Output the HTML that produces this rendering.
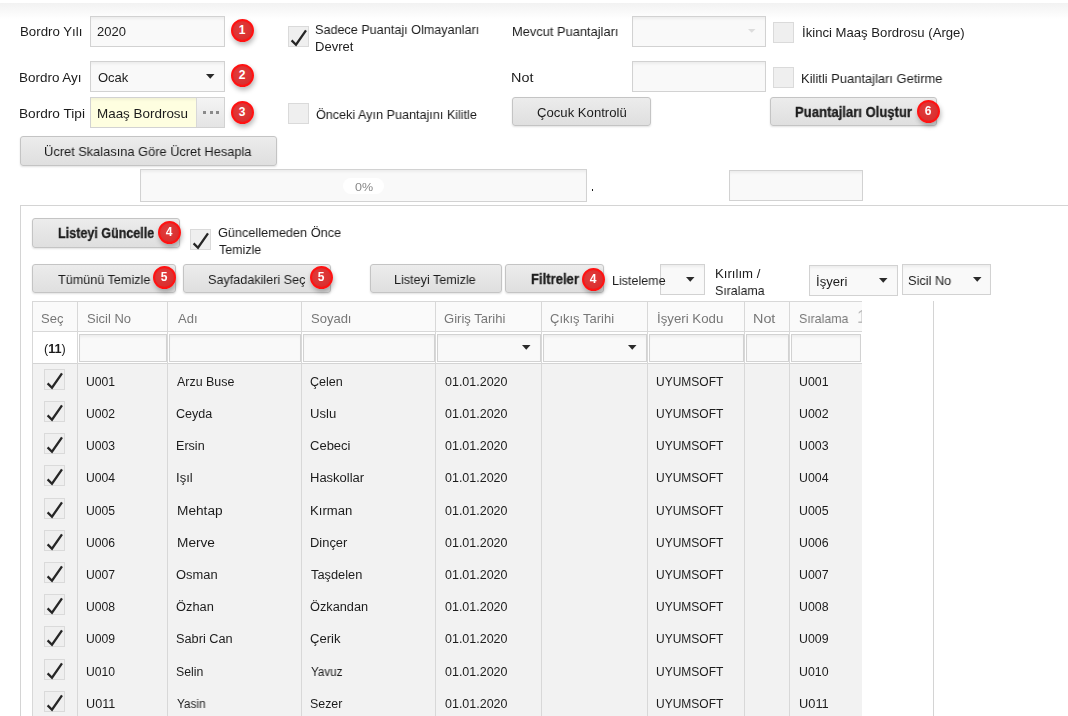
<!DOCTYPE html><html><head><meta charset="utf-8"><style>
*{margin:0;padding:0;box-sizing:border-box}
html,body{width:1068px;height:716px;overflow:hidden;background:#fff;font-family:"Liberation Sans",sans-serif;color:#1c1c1c}
.t{position:absolute;white-space:nowrap;line-height:17px;transform-origin:0 0;will-change:transform}
.inp{position:absolute;border:1px solid #d2d2d2;background:#f9f9f9;box-shadow:inset 0 3px 3px -1px rgba(0,0,0,.05)}
.btn{position:absolute;border:1px solid #c4c4c4;border-radius:3px;background:linear-gradient(#ececec,#dfdfdf);box-shadow:0 1px 2px rgba(0,0,0,.12)}
.chk{position:absolute;border:1px solid #dadada;background:#efefef}
.chk svg{position:absolute;left:-1px;top:-1px}
.badge{position:absolute;width:23px;height:23px;border-radius:50%;background:radial-gradient(circle at 40% 40%,#e33c3c,#d42a2a);border:2px solid #ff1212;color:#fff;font-weight:bold;font-size:12px;line-height:19px;text-align:center;box-shadow:1px 3px 5px rgba(0,0,0,.28)}
.arr{position:absolute;width:0;height:0}
.topbar{position:absolute;left:0;top:3px;width:1068px;height:16px;background:linear-gradient(#f2f2f2,rgba(255,255,255,0))}
</style></head><body>
<div class="topbar"></div>
<div class="t" id="t0" style="left:19.59px;top:23.20px;font-size:13px;transform:scaleX(1.0205);">Bordro Yılı</div>
<div class="inp" style="left:90px;top:16px;width:135px;height:31px;"></div>
<div class="t" id="t1" style="left:97.29px;top:23.20px;font-size:13px;transform:scaleX(0.9940);">2020</div>
<div class="badge" style="left:230.5px;top:18.5px;">1</div>
<div class="chk" style="left:288px;top:26px;width:21px;height:21px;"><svg width="21" height="21" viewBox="0 0 21 21"><path d="M3.6 14.4 L8 18.7 L18 4.4" fill="none" stroke="#262626" stroke-width="2.3"/></svg></div>
<div class="t" id="t2" style="left:315.34px;top:21.20px;font-size:13px;transform:scaleX(0.9713);">Sadece Puantajı Olmayanları</div>
<div class="t" id="t3" style="left:315.30px;top:38.20px;font-size:13px;transform:scaleX(1.0007);">Devret</div>
<div class="t" id="t4" style="left:512.11px;top:23.20px;font-size:13px;transform:scaleX(0.9886);">Mevcut Puantajları</div>
<div class="inp" style="left:632px;top:16px;width:134px;height:31px;"></div>
<svg style="position:absolute;left:746.50px;top:28.00px" width="9.50" height="5.70"><polygon points="1,1 8.50,1 4.75,4.70" fill="#dcdcdc"/></svg>
<div class="chk" style="left:773px;top:22px;width:21px;height:21px;"></div>
<div class="t" id="t5" style="left:802.19px;top:24.20px;font-size:13px;transform:scaleX(1.0101);">İkinci Maaş Bordrosu (Arge)</div>
<div class="t" id="t6" style="left:19.46px;top:69.20px;font-size:13px;transform:scaleX(1.0348);">Bordro Ayı</div>
<div class="inp" style="left:90px;top:61px;width:135px;height:31px;"></div>
<div class="t" id="t7" style="left:97.52px;top:69.20px;font-size:13px;transform:scaleX(0.9942);">Ocak</div>
<svg style="position:absolute;left:204.50px;top:73.40px" width="10.50" height="6.70"><polygon points="1,1 9.50,1 5.25,5.70" fill="#2b2b2b"/></svg>
<div class="badge" style="left:230.5px;top:63.5px;">2</div>
<div class="t" id="t8" style="left:511.36px;top:69.20px;font-size:13px;transform:scaleX(1.1077);">Not</div>
<div class="inp" style="left:632px;top:61px;width:134px;height:31px;"></div>
<div class="chk" style="left:773px;top:67px;width:21px;height:21px;"></div>
<div class="t" id="t9" style="left:801.41px;top:70.20px;font-size:13px;transform:scaleX(0.9944);">Kilitli Puantajları Getirme</div>
<div class="t" id="t10" style="left:19.43px;top:105.20px;font-size:13px;transform:scaleX(1.0494);">Bordro Tipi</div>
<div class="inp" style="left:90px;top:97px;width:135px;height:31px;background:#fefee0;"></div>
<div style="position:absolute;left:196px;top:98px;width:28px;height:29px;border-left:1px solid #d8d8d8;background:linear-gradient(#f4f4f4,#e4e4e4)"></div>
<div style="position:absolute;left:202.5px;top:110.5px;width:3px;height:3px;background:#8a8a8a"></div>
<div style="position:absolute;left:209.5px;top:110.5px;width:3px;height:3px;background:#8a8a8a"></div>
<div style="position:absolute;left:216px;top:110.5px;width:3px;height:3px;background:#8a8a8a"></div>
<div class="t" id="t11" style="left:97.45px;top:105.20px;font-size:13px;transform:scaleX(1.0326);">Maaş Bordrosu</div>
<div class="badge" style="left:230.5px;top:100.5px;">3</div>
<div class="chk" style="left:288px;top:103px;width:21px;height:21px;"></div>
<div class="t" id="t12" style="left:315.54px;top:106.20px;font-size:13px;transform:scaleX(0.9696);">Önceki Ayın Puantajını Kilitle</div>
<div class="btn" style="left:512px;top:97px;width:139px;height:29px;"></div>
<div class="t" id="t13" style="left:537.10px;top:104.20px;font-size:13px;transform:scaleX(1.0093);">Çocuk Kontrolü</div>
<div class="btn" style="left:770px;top:97px;width:167px;height:29px;"></div>
<div class="t" id="t14" style="left:795.20px;top:103.87px;font-size:14px;transform:scaleX(0.9345);font-weight:bold;-webkit-text-stroke:0.3px #222;">Puantajları Oluştur</div>
<div class="badge" style="left:916.5px;top:99.5px;">6</div>
<div class="btn" style="left:20px;top:136px;width:257px;height:30px;"></div>
<div class="t" id="t15" style="left:44.42px;top:143.20px;font-size:13px;transform:scaleX(0.9866);">Ücret Skalasına Göre Ücret Hesapla</div>
<div class="inp" style="left:140px;top:169px;width:447px;height:33px;"></div>
<div style="position:absolute;left:343px;top:178px;width:41px;height:16px;border-radius:8px;background:#fff"></div>
<div class="t" id="t16" style="left:355.38px;top:178.86px;font-size:11px;transform:scaleX(1.1370);color:#888;">0%</div>
<div style="position:absolute;left:592px;top:189px;width:1px;height:2px;background:#1a1a1a"></div>
<div class="inp" style="left:729px;top:170px;width:134px;height:31px;"></div>
<div style="position:absolute;left:20px;top:205px;width:1100px;height:600px;border:1px solid #d4d4d4;background:#fff"></div>
<div class="btn" style="left:32px;top:218px;width:148px;height:30px;"></div>
<div class="t" id="t17" style="left:58.25px;top:224.87px;font-size:14px;transform:scaleX(0.8961);font-weight:bold;-webkit-text-stroke:0.3px #222;">Listeyi Güncelle</div>
<div class="badge" style="left:157.5px;top:220.5px;font-family:"Liberation Serif",serif;font-size:13px;">4</div>
<div class="chk" style="left:190px;top:229px;width:21px;height:21px;"><svg width="21" height="21" viewBox="0 0 21 21"><path d="M3.6 14.4 L8 18.7 L18 4.4" fill="none" stroke="#262626" stroke-width="2.3"/></svg></div>
<div class="t" id="t18" style="left:218.43px;top:224.20px;font-size:13px;transform:scaleX(0.9791);">Güncellemeden Önce</div>
<div class="t" id="t19" style="left:219.40px;top:241.20px;font-size:13px;transform:scaleX(0.9586);">Temizle</div>
<div class="btn" style="left:32px;top:264px;width:144px;height:29px;"></div>
<div class="t" id="t20" style="left:57.89px;top:271.20px;font-size:13px;transform:scaleX(0.9706);">Tümünü Temizle</div>
<div class="badge" style="left:152.5px;top:265.5px;font-family:"Liberation Serif",serif;font-size:13px;">5</div>
<div class="btn" style="left:183px;top:264px;width:148px;height:29px;"></div>
<div class="t" id="t21" style="left:207.54px;top:271.20px;font-size:13px;transform:scaleX(0.9698);">Sayfadakileri Seç</div>
<div class="badge" style="left:309.5px;top:265.5px;font-family:"Liberation Serif",serif;font-size:13px;">5</div>
<div class="btn" style="left:370px;top:264px;width:132px;height:29px;"></div>
<div class="t" id="t22" style="left:394.34px;top:271.20px;font-size:13px;transform:scaleX(0.9688);">Listeyi Temizle</div>
<div class="btn" style="left:505px;top:264px;width:99px;height:29px;"></div>
<div class="t" id="t23" style="left:531.27px;top:270.87px;font-size:14px;transform:scaleX(0.9323);font-weight:bold;-webkit-text-stroke:0.3px #222;">Filtreler</div>
<div class="badge" style="left:581.5px;top:267.5px;font-family:"Liberation Serif",serif;font-size:13px;">4</div>
<div class="inp" style="left:660px;top:264px;width:45px;height:31px;"></div>
<svg style="position:absolute;left:684.50px;top:276.00px" width="10.50" height="6.70"><polygon points="1,1 9.50,1 5.25,5.70" fill="#2b2b2b"/></svg>
<div class="t" id="t24" style="left:611.54px;top:272.20px;font-size:13px;transform:scaleX(0.9633);">Listeleme</div>
<div class="t" id="t25" style="left:715.28px;top:265.20px;font-size:13px;transform:scaleX(1.0139);">Kırılım /</div>
<div class="t" id="t26" style="left:715.37px;top:282.20px;font-size:13px;transform:scaleX(0.9532);">Sıralama</div>
<div class="inp" style="left:809px;top:265px;width:89px;height:31px;"></div>
<div class="t" id="t27" style="left:815.70px;top:273.20px;font-size:13px;transform:scaleX(1.0079);">İşyeri</div>
<svg style="position:absolute;left:877.50px;top:277.00px" width="10.50" height="6.70"><polygon points="1,1 9.50,1 5.25,5.70" fill="#2b2b2b"/></svg>
<div class="inp" style="left:902px;top:264px;width:89px;height:31px;"></div>
<div class="t" id="t28" style="left:908.43px;top:272.20px;font-size:13px;transform:scaleX(0.9819);">Sicil No</div>
<svg style="position:absolute;left:971.50px;top:276.20px" width="10.50" height="6.70"><polygon points="1,1 9.50,1 5.25,5.70" fill="#2b2b2b"/></svg>
<div style="position:absolute;left:933px;top:301px;width:1px;height:420px;background:#d4d4d4"></div>
<div style="position:absolute;left:32px;top:301px;width:830px;height:31px;background:#fafafa;border-top:1px solid #d8d8d8;border-bottom:1px solid #d8d8d8"></div>
<div style="position:absolute;left:32px;top:332px;width:830px;height:32px;background:#fff;border-bottom:1px solid #d4d4d4"></div>
<div style="position:absolute;left:32px;top:364px;width:830px;height:360px;background:#f2f2f2"></div>
<div style="position:absolute;left:32px;top:301px;width:1px;height:420px;background:#d8d8d8"></div>
<div style="position:absolute;left:77px;top:301px;width:1px;height:420px;background:#d8d8d8"></div>
<div style="position:absolute;left:167px;top:301px;width:1px;height:420px;background:#d8d8d8"></div>
<div style="position:absolute;left:301px;top:301px;width:1px;height:420px;background:#d8d8d8"></div>
<div style="position:absolute;left:435px;top:301px;width:1px;height:420px;background:#d8d8d8"></div>
<div style="position:absolute;left:541px;top:301px;width:1px;height:420px;background:#d8d8d8"></div>
<div style="position:absolute;left:647px;top:301px;width:1px;height:420px;background:#d8d8d8"></div>
<div style="position:absolute;left:744px;top:301px;width:1px;height:420px;background:#d8d8d8"></div>
<div style="position:absolute;left:789px;top:301px;width:1px;height:420px;background:#d8d8d8"></div>
<div class="t" id="t29" style="left:41.30px;top:310.20px;font-size:13px;color:#777;">Seç</div>
<div class="t" id="t30" style="left:86.50px;top:310.20px;font-size:13px;transform:scaleX(0.9911);color:#777;">Sicil No</div>
<div class="t" id="t31" style="left:177.60px;top:310.20px;font-size:13px;transform:scaleX(1.0000);color:#777;">Adı</div>
<div class="t" id="t32" style="left:310.50px;top:310.20px;font-size:13px;color:#777;">Soyadı</div>
<div class="t" id="t33" style="left:444.29px;top:310.20px;font-size:13px;transform:scaleX(1.0035);color:#777;">Giriş Tarihi</div>
<div class="t" id="t34" style="left:550.40px;top:310.20px;font-size:13px;color:#777;">Çıkış Tarihi</div>
<div class="t" id="t35" style="left:657.18px;top:310.20px;font-size:13px;transform:scaleX(1.0192);color:#777;">İşyeri Kodu</div>
<div class="t" id="t36" style="left:753.25px;top:310.20px;font-size:13px;transform:scaleX(1.1053);color:#777;">Not</div>
<div class="t" id="t37" style="left:798.74px;top:310.20px;font-size:13px;transform:scaleX(0.9492);color:#777;">Sıralama</div>
<div style="position:absolute;left:855px;top:302px;width:7px;height:28px;overflow:hidden"><div style="position:absolute;left:2px;top:3px;font-size:18px;line-height:24px;color:#bbb;white-space:nowrap;will-change:transform">1</div></div>
<div class="inp" style="left:79px;top:334px;width:88px;height:28px;"></div>
<div class="inp" style="left:169px;top:334px;width:132px;height:28px;"></div>
<div class="inp" style="left:303px;top:334px;width:132px;height:28px;"></div>
<div class="inp" style="left:437px;top:334px;width:104px;height:28px;"></div>
<div class="inp" style="left:543px;top:334px;width:104px;height:28px;"></div>
<div class="inp" style="left:649px;top:334px;width:95px;height:28px;"></div>
<div class="inp" style="left:746px;top:334px;width:43px;height:28px;"></div>
<div class="inp" style="left:791px;top:334px;width:70px;height:28px;"></div>
<svg style="position:absolute;left:521.20px;top:344.00px" width="10.50" height="6.70"><polygon points="1,1 9.50,1 5.25,5.70" fill="#2b2b2b"/></svg>
<svg style="position:absolute;left:626.50px;top:344.00px" width="10.50" height="6.70"><polygon points="1,1 9.50,1 5.25,5.70" fill="#2b2b2b"/></svg>
<div class="t" id="t38" style="left:44.23px;top:340.53px;font-size:12px;transform:scaleX(1.0551);">(<b>11</b>)</div>
<div class="chk" style="left:44px;top:369px;width:21px;height:21px;"><svg width="21" height="21" viewBox="0 0 21 21"><path d="M3.6 14.4 L8 18.7 L18 4.4" fill="none" stroke="#262626" stroke-width="2.3"/></svg></div>
<div class="t" id="t39" style="left:86.39px;top:373.53px;font-size:12px;transform:scaleX(1.0149);">U001</div>
<div class="t" id="t40" style="left:176.78px;top:373.53px;font-size:12px;transform:scaleX(1.0366);">Arzu Buse</div>
<div class="t" id="t41" style="left:310.08px;top:373.53px;font-size:12px;transform:scaleX(1.0473);">Çelen</div>
<div class="t" id="t42" style="left:445.40px;top:373.53px;font-size:12px;transform:scaleX(1.0401);">01.01.2020</div>
<div class="t" id="t43" style="left:655.90px;top:373.53px;font-size:12px;transform:scaleX(1.0001);">UYUMSOFT</div>
<div class="t" id="t44" style="left:798.56px;top:373.53px;font-size:12px;transform:scaleX(1.0296);">U001</div>
<div class="chk" style="left:44px;top:401px;width:21px;height:21px;"><svg width="21" height="21" viewBox="0 0 21 21"><path d="M3.6 14.4 L8 18.7 L18 4.4" fill="none" stroke="#262626" stroke-width="2.3"/></svg></div>
<div class="t" id="t45" style="left:86.39px;top:405.53px;font-size:12px;transform:scaleX(1.0149);">U002</div>
<div class="t" id="t46" style="left:175.73px;top:405.53px;font-size:12px;transform:scaleX(1.0476);">Ceyda</div>
<div class="t" id="t47" style="left:310.04px;top:405.53px;font-size:12px;transform:scaleX(1.0923);">Uslu</div>
<div class="t" id="t48" style="left:445.40px;top:405.53px;font-size:12px;transform:scaleX(1.0401);">01.01.2020</div>
<div class="t" id="t49" style="left:655.90px;top:405.53px;font-size:12px;transform:scaleX(1.0001);">UYUMSOFT</div>
<div class="t" id="t50" style="left:798.56px;top:405.53px;font-size:12px;transform:scaleX(1.0296);">U002</div>
<div class="chk" style="left:44px;top:433px;width:21px;height:21px;"><svg width="21" height="21" viewBox="0 0 21 21"><path d="M3.6 14.4 L8 18.7 L18 4.4" fill="none" stroke="#262626" stroke-width="2.3"/></svg></div>
<div class="t" id="t51" style="left:86.39px;top:437.53px;font-size:12px;transform:scaleX(1.0149);">U003</div>
<div class="t" id="t52" style="left:175.75px;top:437.53px;font-size:12px;transform:scaleX(1.0467);">Ersin</div>
<div class="t" id="t53" style="left:310.03px;top:437.53px;font-size:12px;transform:scaleX(1.0839);">Cebeci</div>
<div class="t" id="t54" style="left:445.40px;top:437.53px;font-size:12px;transform:scaleX(1.0401);">01.01.2020</div>
<div class="t" id="t55" style="left:655.90px;top:437.53px;font-size:12px;transform:scaleX(1.0001);">UYUMSOFT</div>
<div class="t" id="t56" style="left:798.56px;top:437.53px;font-size:12px;transform:scaleX(1.0296);">U003</div>
<div class="chk" style="left:44px;top:465px;width:21px;height:21px;"><svg width="21" height="21" viewBox="0 0 21 21"><path d="M3.6 14.4 L8 18.7 L18 4.4" fill="none" stroke="#262626" stroke-width="2.3"/></svg></div>
<div class="t" id="t57" style="left:86.39px;top:469.53px;font-size:12px;transform:scaleX(1.0149);">U004</div>
<div class="t" id="t58" style="left:175.65px;top:469.53px;font-size:12px;transform:scaleX(1.0895);">Işıl</div>
<div class="t" id="t59" style="left:310.05px;top:469.53px;font-size:12px;transform:scaleX(1.0819);">Haskollar</div>
<div class="t" id="t60" style="left:445.40px;top:469.53px;font-size:12px;transform:scaleX(1.0401);">01.01.2020</div>
<div class="t" id="t61" style="left:655.90px;top:469.53px;font-size:12px;transform:scaleX(1.0001);">UYUMSOFT</div>
<div class="t" id="t62" style="left:798.56px;top:469.53px;font-size:12px;transform:scaleX(1.0296);">U004</div>
<div class="chk" style="left:44px;top:498px;width:21px;height:21px;"><svg width="21" height="21" viewBox="0 0 21 21"><path d="M3.6 14.4 L8 18.7 L18 4.4" fill="none" stroke="#262626" stroke-width="2.3"/></svg></div>
<div class="t" id="t63" style="left:86.39px;top:502.53px;font-size:12px;transform:scaleX(1.0149);">U005</div>
<div class="t" id="t64" style="left:176.61px;top:502.53px;font-size:12px;transform:scaleX(1.1388);">Mehtap</div>
<div class="t" id="t65" style="left:310.03px;top:502.53px;font-size:12px;transform:scaleX(1.0923);">Kırman</div>
<div class="t" id="t66" style="left:445.40px;top:502.53px;font-size:12px;transform:scaleX(1.0401);">01.01.2020</div>
<div class="t" id="t67" style="left:655.90px;top:502.53px;font-size:12px;transform:scaleX(1.0001);">UYUMSOFT</div>
<div class="t" id="t68" style="left:798.56px;top:502.53px;font-size:12px;transform:scaleX(1.0296);">U005</div>
<div class="chk" style="left:44px;top:530px;width:21px;height:21px;"><svg width="21" height="21" viewBox="0 0 21 21"><path d="M3.6 14.4 L8 18.7 L18 4.4" fill="none" stroke="#262626" stroke-width="2.3"/></svg></div>
<div class="t" id="t69" style="left:86.39px;top:534.53px;font-size:12px;transform:scaleX(1.0149);">U006</div>
<div class="t" id="t70" style="left:176.61px;top:534.53px;font-size:12px;transform:scaleX(1.1380);">Merve</div>
<div class="t" id="t71" style="left:310.04px;top:534.53px;font-size:12px;transform:scaleX(1.0766);">Dinçer</div>
<div class="t" id="t72" style="left:445.40px;top:534.53px;font-size:12px;transform:scaleX(1.0401);">01.01.2020</div>
<div class="t" id="t73" style="left:655.90px;top:534.53px;font-size:12px;transform:scaleX(1.0001);">UYUMSOFT</div>
<div class="t" id="t74" style="left:798.56px;top:534.53px;font-size:12px;transform:scaleX(1.0296);">U006</div>
<div class="chk" style="left:44px;top:562px;width:21px;height:21px;"><svg width="21" height="21" viewBox="0 0 21 21"><path d="M3.6 14.4 L8 18.7 L18 4.4" fill="none" stroke="#262626" stroke-width="2.3"/></svg></div>
<div class="t" id="t75" style="left:86.39px;top:566.53px;font-size:12px;transform:scaleX(1.0149);">U007</div>
<div class="t" id="t76" style="left:175.77px;top:566.53px;font-size:12px;transform:scaleX(1.0747);">Osman</div>
<div class="t" id="t77" style="left:311.12px;top:566.53px;font-size:12px;transform:scaleX(1.0683);">Taşdelen</div>
<div class="t" id="t78" style="left:445.40px;top:566.53px;font-size:12px;transform:scaleX(1.0401);">01.01.2020</div>
<div class="t" id="t79" style="left:655.90px;top:566.53px;font-size:12px;transform:scaleX(1.0001);">UYUMSOFT</div>
<div class="t" id="t80" style="left:798.56px;top:566.53px;font-size:12px;transform:scaleX(1.0296);">U007</div>
<div class="chk" style="left:44px;top:594px;width:21px;height:21px;"><svg width="21" height="21" viewBox="0 0 21 21"><path d="M3.6 14.4 L8 18.7 L18 4.4" fill="none" stroke="#262626" stroke-width="2.3"/></svg></div>
<div class="t" id="t81" style="left:86.39px;top:598.53px;font-size:12px;transform:scaleX(1.0149);">U008</div>
<div class="t" id="t82" style="left:175.77px;top:598.53px;font-size:12px;transform:scaleX(1.0694);">Özhan</div>
<div class="t" id="t83" style="left:310.10px;top:598.53px;font-size:12px;transform:scaleX(1.0631);">Özkandan</div>
<div class="t" id="t84" style="left:445.40px;top:598.53px;font-size:12px;transform:scaleX(1.0401);">01.01.2020</div>
<div class="t" id="t85" style="left:655.90px;top:598.53px;font-size:12px;transform:scaleX(1.0001);">UYUMSOFT</div>
<div class="t" id="t86" style="left:798.56px;top:598.53px;font-size:12px;transform:scaleX(1.0296);">U008</div>
<div class="chk" style="left:44px;top:626px;width:21px;height:21px;"><svg width="21" height="21" viewBox="0 0 21 21"><path d="M3.6 14.4 L8 18.7 L18 4.4" fill="none" stroke="#262626" stroke-width="2.3"/></svg></div>
<div class="t" id="t87" style="left:86.39px;top:630.53px;font-size:12px;transform:scaleX(1.0149);">U009</div>
<div class="t" id="t88" style="left:175.72px;top:630.53px;font-size:12px;transform:scaleX(1.0617);">Sabri Can</div>
<div class="t" id="t89" style="left:310.05px;top:630.53px;font-size:12px;transform:scaleX(1.0896);">Çerik</div>
<div class="t" id="t90" style="left:445.40px;top:630.53px;font-size:12px;transform:scaleX(1.0401);">01.01.2020</div>
<div class="t" id="t91" style="left:655.90px;top:630.53px;font-size:12px;transform:scaleX(1.0001);">UYUMSOFT</div>
<div class="t" id="t92" style="left:798.56px;top:630.53px;font-size:12px;transform:scaleX(1.0296);">U009</div>
<div class="chk" style="left:44px;top:659px;width:21px;height:21px;"><svg width="21" height="21" viewBox="0 0 21 21"><path d="M3.6 14.4 L8 18.7 L18 4.4" fill="none" stroke="#262626" stroke-width="2.3"/></svg></div>
<div class="t" id="t93" style="left:86.39px;top:663.53px;font-size:12px;transform:scaleX(1.0149);">U010</div>
<div class="t" id="t94" style="left:175.74px;top:663.53px;font-size:12px;transform:scaleX(1.0248);">Selin</div>
<div class="t" id="t95" style="left:311.09px;top:663.53px;font-size:12px;transform:scaleX(0.9695);">Yavuz</div>
<div class="t" id="t96" style="left:445.40px;top:663.53px;font-size:12px;transform:scaleX(1.0401);">01.01.2020</div>
<div class="t" id="t97" style="left:655.90px;top:663.53px;font-size:12px;transform:scaleX(1.0001);">UYUMSOFT</div>
<div class="t" id="t98" style="left:798.56px;top:663.53px;font-size:12px;transform:scaleX(1.0296);">U010</div>
<div class="chk" style="left:44px;top:691px;width:21px;height:21px;"><svg width="21" height="21" viewBox="0 0 21 21"><path d="M3.6 14.4 L8 18.7 L18 4.4" fill="none" stroke="#262626" stroke-width="2.3"/></svg></div>
<div class="t" id="t99" style="left:86.36px;top:695.53px;font-size:12px;transform:scaleX(1.0540);">U011</div>
<div class="t" id="t100" style="left:176.79px;top:695.53px;font-size:12px;transform:scaleX(0.9800);">Yasin</div>
<div class="t" id="t101" style="left:310.08px;top:695.53px;font-size:12px;transform:scaleX(1.0333);">Sezer</div>
<div class="t" id="t102" style="left:445.40px;top:695.53px;font-size:12px;transform:scaleX(1.0401);">01.01.2020</div>
<div class="t" id="t103" style="left:655.90px;top:695.53px;font-size:12px;transform:scaleX(1.0001);">UYUMSOFT</div>
<div class="t" id="t104" style="left:798.52px;top:695.53px;font-size:12px;transform:scaleX(1.0692);">U011</div>
</body></html>
